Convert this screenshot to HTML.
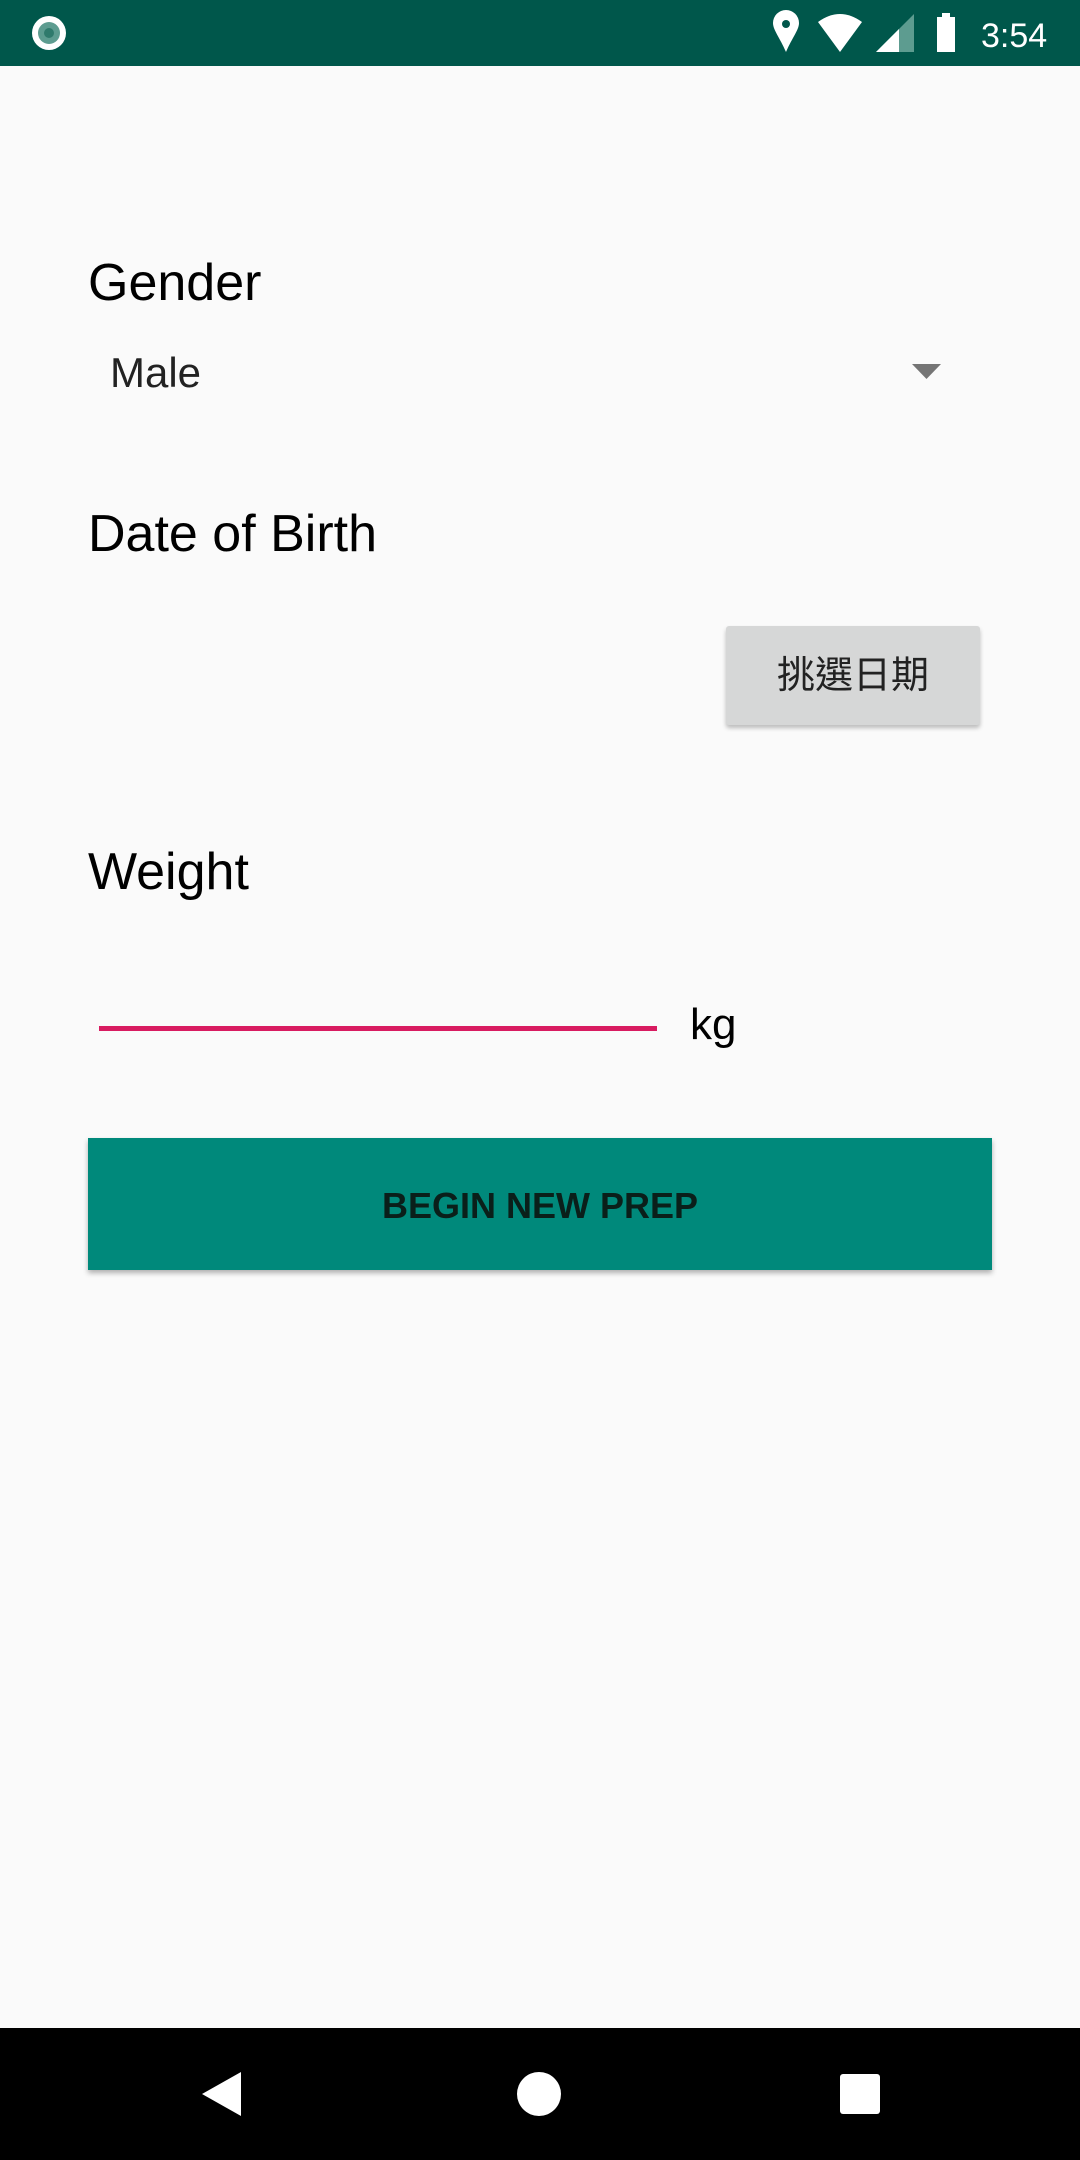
<!DOCTYPE html>
<html><head><meta charset="utf-8"><style>
html,body{margin:0;padding:0}
body{width:1080px;height:2160px;background:#fafafa;position:relative;overflow:hidden;font-family:"Liberation Sans","Noto Sans CJK TC",sans-serif}
.a{position:absolute;white-space:nowrap}
</style></head><body>
<div class="a" style="left:0;top:0;width:1080px;height:66px;background:#00574b"></div>
<svg class="a" style="left:0;top:0" width="1080" height="66">
<circle cx="49" cy="33" r="17" fill="#fff"/><circle cx="49" cy="33" r="11" fill="#5d9c90"/><circle cx="49" cy="33" r="5" fill="#2f7a6c"/>
<path d="M786 52 C780 38 773 30 773 23 A13 13 0 0 1 799 23 C799 30 792 38 786 52Z" fill="#fff"/><circle cx="786" cy="24" r="4" fill="#00574b"/>
<path d="M818 22 Q840 6 862 22 L840 52Z" fill="#fff"/>
<path d="M876 52 L914 14 L914 52Z" fill="#5d9c90"/><path d="M876 52 L899 29 L899 52Z" fill="#fff"/>
<rect x="937" y="17" width="18" height="35" fill="#fff"/><rect x="942" y="13" width="8" height="5" fill="#fff"/>
<text x="981" y="47" font-size="34" fill="#fff" font-family="Liberation Sans">3:54</text>
</svg>
<div class="a" style="left:88px;top:248px;font-size:52px;line-height:70px;color:#000">Gender</div>
<div class="a" style="left:110px;top:347px;font-size:42px;line-height:52px;color:#222">Male</div>
<svg class="a" style="left:912px;top:364px" width="30" height="16"><path d="M0 0H29L14.5 15Z" fill="#757575"/></svg>
<div class="a" style="left:88px;top:499px;font-size:52px;line-height:70px;color:#000">Date of Birth</div>
<div class="a" style="left:726px;top:626px;width:254px;height:99px;background:#d6d7d7;border-radius:3px;box-shadow:0 3px 4px rgba(0,0,0,.25);font-size:38px;line-height:101px;text-align:center;color:#222">挑選日期</div>
<div class="a" style="left:88px;top:837px;font-size:52px;line-height:70px;color:#000">Weight</div>
<div class="a" style="left:99px;top:1026px;width:558px;height:5px;background:#d81b60"></div>
<div class="a" style="left:690px;top:997px;font-size:44px;line-height:56px;color:#000">kg</div>
<div class="a" style="left:88px;top:1138px;width:904px;height:132px;background:#00897b;box-shadow:0 3px 5px rgba(0,0,0,.3);font-size:36px;font-weight:bold;line-height:136px;text-align:center;color:#0a1f1a">BEGIN NEW PREP</div>
<div class="a" style="left:0;top:2028px;width:1080px;height:132px;background:#000"></div>
<svg class="a" style="left:0;top:2028px" width="1080" height="132">
<path d="M241 44 V88 L202 66Z" fill="#fff"/>
<circle cx="539" cy="66" r="22" fill="#fff"/>
<rect x="840" y="46" width="40" height="40" rx="3" fill="#fff"/>
</svg>
</body></html>
